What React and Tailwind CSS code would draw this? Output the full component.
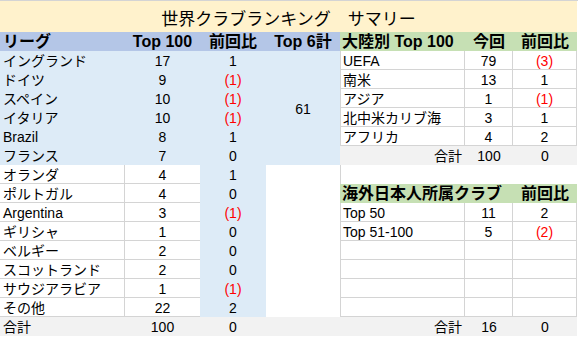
import React from 'react';

const LEAGUES = [
  { name: 'イングランド', top: 17, diff: 1 },
  { name: 'ドイツ', top: 9, diff: -1 },
  { name: 'スペイン', top: 10, diff: -1 },
  { name: 'イタリア', top: 10, diff: -1 },
  { name: 'Brazil', top: 8, diff: 1 },
  { name: 'フランス', top: 7, diff: 0 },
  { name: 'オランダ', top: 4, diff: 1 },
  { name: 'ポルトガル', top: 4, diff: 0 },
  { name: 'Argentina', top: 3, diff: -1 },
  { name: 'ギリシャ', top: 1, diff: 0 },
  { name: 'ベルギー', top: 2, diff: 0 },
  { name: 'スコットランド', top: 2, diff: 0 },
  { name: 'サウジアラビア', top: 1, diff: -1 },
  { name: 'その他', top: 22, diff: 2 },
];

const CONTINENTS = [
  { name: 'UEFA', now: 79, diff: -3 },
  { name: '南米', now: 13, diff: 1 },
  { name: 'アジア', now: 1, diff: -1 },
  { name: '北中米カリブ海', now: 3, diff: 1 },
  { name: 'アフリカ', now: 4, diff: 2 },
];

const JAPANESE = [
  { name: 'Top 50', now: 11, diff: 2 },
  { name: 'Top 51-100', now: 5, diff: -2 },
];

// negative numbers are shown in red with parentheses, like the sheet does
function Diff({ value }) {
  if (value < 0) return <span className="text-[#ff0000]">({-value})</span>;
  return <span>{value}</span>;
}

const cell = 'leading-[19px] pt-[1px] whitespace-nowrap overflow-hidden';
const head = 'leading-[19px] whitespace-nowrap overflow-hidden font-bold text-[16px]';
const line = 'border-[#d4d4d4]';

function RightSide({ i }) {
  if (i < 5) {
    const c = CONTINENTS[i];
    return (
      <>
        <div className={`${cell} ${line} border-l border-r border-b bg-white pl-[2px]`}>{c.name}</div>
        <div className={`${cell} ${line} border-r border-b bg-white text-center`}>{c.now}</div>
        <div className={`${cell} ${line} border-r border-b bg-white text-center`}><Diff value={c.diff} /></div>
      </>
    );
  }
  if (i === 5) {
    return (
      <>
        <div className={`${cell} bg-[#f2f2f2] text-right pr-[3px]`}>合計</div>
        <div className={`${cell} bg-[#f2f2f2] text-center`}>100</div>
        <div className={`${cell} bg-[#f2f2f2] text-center`}>0</div>
      </>
    );
  }
  if (i === 6) {
    return <div className={`col-span-3 ${line} border-l bg-white`} />;
  }
  if (i === 7) {
    return (
      <>
        <div className={`${head} col-span-2 bg-[#c6e0b4] pl-[2px]`}>海外日本人所属クラブ</div>
        <div className={`${head} bg-[#c6e0b4] text-center`}>前回比</div>
      </>
    );
  }
  const j = JAPANESE[i - 8];
  return (
    <>
      <div className={`${cell} ${line} border-l border-r border-b bg-white pl-[2px]`}>{j?.name}</div>
      <div className={`${cell} ${line} border-r border-b bg-white text-center`}>{j?.now}</div>
      <div className={`${cell} ${line} border-r border-b bg-white text-center`}>{j && <Diff value={j.diff} />}</div>
    </>
  );
}

export default function App() {
  return (
    <div className="w-[578px] h-[337px] overflow-hidden bg-white border-t border-[#d4d4d4] text-black text-[14px] font-['Liberation_Sans','Noto_Sans_CJK_JP',sans-serif]">
      <div className="h-[31px] w-[577px] bg-[#fff2cc] flex items-center justify-center pt-[2px] text-[17px] font-['Noto_Sans_CJK_JP',sans-serif]">
        世界クラブランキング　サマリー
      </div>

      <div className="grid grid-cols-[125px_75px_66px_74px_125px_48px_64px] auto-rows-[19px]">
        {/* header row */}
        <div className={`${head} bg-[#b4c6e7] pl-[3px]`}>リーグ</div>
        <div className={`${head} bg-[#b4c6e7] text-center text-[15px]`}>Top 100</div>
        <div className={`${head} bg-[#b4c6e7] text-center`}>前回比</div>
        <div className={`${head} bg-[#b4c6e7] text-center text-[15px]`}>Top 6計</div>
        <div className={`${head} bg-[#c6e0b4] pl-[2px] text-[15px]`}>大陸別 Top 100</div>
        <div className={`${head} bg-[#c6e0b4] text-center`}>今回</div>
        <div className={`${head} bg-[#c6e0b4] text-center`}>前回比</div>

        {LEAGUES.map((l, i) => {
          const top6 = i < 6;
          return (
            <React.Fragment key={l.name}>
              <div className={`${cell} pl-[3px] ${top6 ? 'bg-[#ddebf7]' : `bg-white border-r border-b ${line}`}`}>{l.name}</div>
              <div className={`${cell} text-center ${top6 ? 'bg-[#ddebf7]' : `bg-white border-b ${line}`}`}>{l.top}</div>
              <div className={`${cell} text-center bg-[#ddebf7]`}><Diff value={l.diff} /></div>
              {i === 0 && (
                <div className="row-span-6 bg-[#ddebf7] flex items-center justify-center pt-[2px]">61</div>
              )}
              {!top6 && <div className="bg-white" />}
              <RightSide i={i} />
            </React.Fragment>
          );
        })}

        {/* totals */}
        <div className={`${cell} bg-[#f2f2f2] pl-[3px]`}>合計</div>
        <div className={`${cell} bg-[#f2f2f2] text-center`}>100</div>
        <div className={`${cell} bg-[#f2f2f2] text-center`}>0</div>
        <div className={`${cell} bg-[#f2f2f2]`} />
        <div className={`${cell} bg-[#f2f2f2] text-right pr-[3px]`}>合計</div>
        <div className={`${cell} bg-[#f2f2f2] text-center`}>16</div>
        <div className={`${cell} bg-[#f2f2f2] text-center`}>0</div>
      </div>
    </div>
  );
}
